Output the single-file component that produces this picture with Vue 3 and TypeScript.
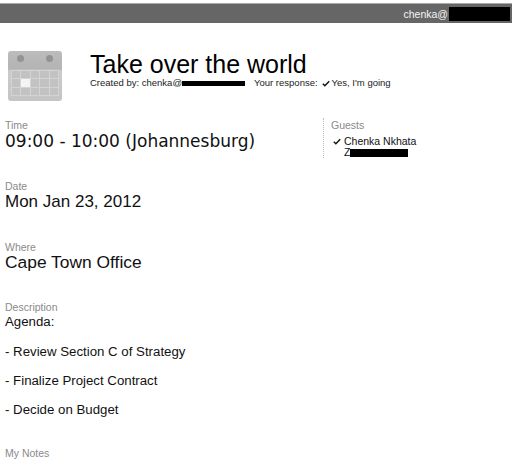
<script setup lang="ts">
const cells = Array.from({ length: 15 }, (_, i) => i);
const lines = ['Agenda:', '- Review Section C of Strategy', '- Finalize Project Contract', '- Decide on Budget'];
</script>

<template>
  <div class="page">
    <header class="topbar">
      <span class="user">chenka@</span><span class="redact top-redact"></span>
    </header>

    <section class="head">
      <div class="cal">
        <div class="cal-top"><i class="hole"></i><i class="hole"></i></div>
        <div class="cal-grid">
          <i v-for="c in cells" :key="c" class="cell" :class="{ today: c === 6 }"></i>
        </div>
      </div>
      <div class="head-text">
        <h1 class="title">Take over the world</h1>
        <div class="meta">
          <span>Created by: chenka@</span><span class="redact meta-redact"></span>
          <span class="resp">Your response:</span>
          <svg class="check" viewBox="0 0 10 8"><path d="M1 4.2 3.6 6.8 9 1.2" /></svg>
          <span>Yes, I'm going</span>
        </div>
      </div>
    </section>

    <section class="columns">
      <div class="left">
        <div class="label">Time</div>
        <div class="value time">09:00 - 10:00 (Johannesburg)</div>
      </div>
      <aside class="guests">
        <div class="label">Guests</div>
        <div class="guest">
          <svg class="check" viewBox="0 0 10 8"><path d="M1 4.2 3.6 6.8 9 1.2" /></svg>
          <div class="guest-names">
            <div>Chenka Nkhata</div>
            <div class="second">Z<span class="redact guest-redact"></span></div>
          </div>
        </div>
      </aside>
    </section>

    <section class="field date">
      <div class="label">Date</div>
      <div class="value">Mon Jan 23, 2012</div>
    </section>
    <section class="field where">
      <div class="label">Where</div>
      <div class="value place">Cape Town Office</div>
    </section>
    <section class="field desc">
      <div class="label">Description</div>
      <div class="lines">
        <div v-for="l in lines" :key="l" class="line">{{ l }}</div>
      </div>
    </section>
    <section class="field notes">
      <div class="label">My Notes</div>
    </section>
  </div>
</template>

<style>
html, body { margin: 0; background: #fff; overflow: hidden; }
</style>

<style scoped>
.page {
  width: 512px;
  height: 469px;
  overflow: hidden;
  font-family: "Liberation Sans", Arial, sans-serif;
  color: #111;
  box-sizing: border-box;
  padding-top: 3px;
}
.topbar {
  height: 20px;
  background: #666;
  border-top: 1px solid #aaa;
  box-sizing: border-box;
  display: flex;
  align-items: center;
  justify-content: flex-end;
  color: #f4f4f4;
  font-size: 10.5px;
  padding-right: 2px;
}
.user { margin-right: 1px; }
.redact { display: inline-block; background: #000; }
.top-redact { width: 61px; height: 14px; }
.head { display: flex; margin-top: 27px; padding-left: 8px; }
.cal {
  width: 54px;
  height: 50px;
  border-radius: 3px;
  background: linear-gradient(#bcbcbc 0, #b4b4b4 35%, #cbcbcb 40%, #c4c4c4 100%);
  box-sizing: border-box;
  margin-top: 1px;
}
.cal-top { height: 19px; display: flex; justify-content: space-between; padding: 4px 9px 0 9px; box-sizing: border-box; }
.hole { width: 7px; height: 7px; border-radius: 50%; background: #939393; display: block; }
.cal-grid {
  margin: 0 3px;
  display: grid;
  grid-template-columns: repeat(5, 1fr);
  grid-template-rows: repeat(3, 1fr);
  gap: 1px;
  height: 24px;
  padding: 1px;
  background: #d4d4d4;
}
.cell { background: #c2c2c2; display: block; }
.cell.today { background: #f4f4f4; }
.head-text { margin-left: 28px; }
.title { margin: 0; font-size: 25px; font-weight: 400; line-height: 28px; color: #000; }
.meta { font-size: 9.5px; line-height: 12px; margin-top: -1px; display: flex; align-items: center; color: #222; }
.meta-redact { width: 63px; height: 5px; }
.resp { margin-left: 9px; }
.check { width: 8px; height: 7px; margin: 0 2px 0 4px; flex: none; }
.check path { fill: none; stroke: #111; stroke-width: 1.8; }
.columns { display: flex; margin-top: 18px; padding-left: 5px; }
.left { width: 318px; }
.label { font-size: 10.5px; line-height: 12px; color: #8a8a8a; }
.value { font-size: 17px; line-height: 19px; color: #111; }
.place { font-size: 17.4px; }
.time { font-family: "DejaVu Sans", sans-serif; font-size: 17px; line-height: 20px; }
.guests { border-left: 1px dotted #bbb; padding: 1px 0 0 7px; height: 40px; box-sizing: border-box; margin-top: -1px; }
.guest { display: flex; font-size: 10.5px; line-height: 11px; margin-top: 5px; color: #111; }
.guest .check { margin: 2px 3px 0 2px; }
.second { display: flex; align-items: center; }
.guest-redact { width: 58px; height: 8px; }
.field { padding-left: 5px; }
.date { margin-top: 22px; }
.where { margin-top: 30px; }
.desc { margin-top: 29px; }
.lines { margin-top: 1px; }
.line { font-size: 13.25px; line-height: 15px; margin-bottom: 14px; }
.line:first-child { margin-bottom: 15px; }
.notes { margin-top: 30px; }
</style>
